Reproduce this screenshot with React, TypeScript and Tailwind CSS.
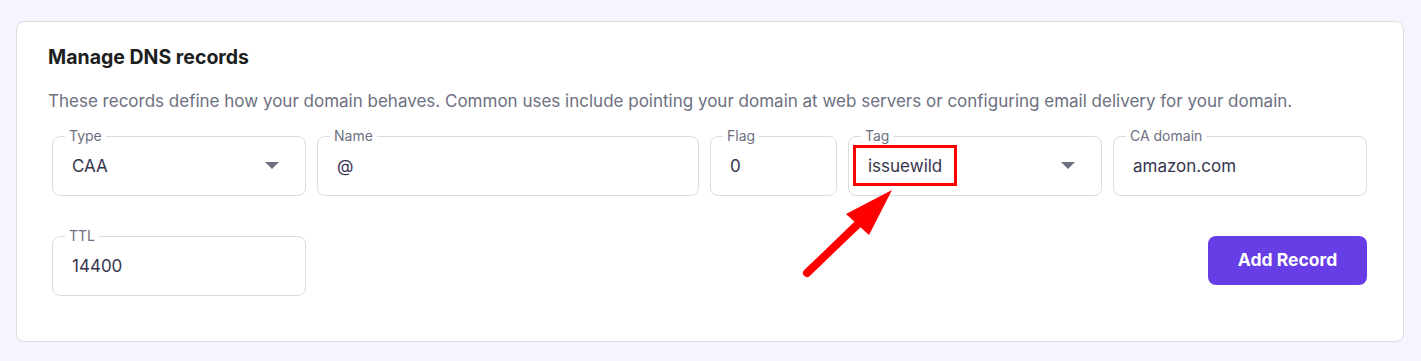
import { ReactNode } from 'react';

function Caret() {
  return (
    <svg width="14" height="8" viewBox="0 0 14 8" className="shrink-0">
      <path d="M0 0 L14 0 L7 7 Z" fill="#6d7081" />
    </svg>
  );
}

function Field({ label, width, value, select }: { label: string; width: string; value: ReactNode; select?: boolean }) {
  return (
    <fieldset className={`${width} h-[68px] shrink-0 rounded-lg border border-[#dadce0] px-3`}>
      <legend className="px-1 text-[14px] leading-4 text-[#6d7081]">{label}</legend>
      <div className="flex items-center justify-between pl-[7px] pr-[14px] pt-[10px]">
        <span className="text-[17px] leading-6 text-[#36344d]">{value}</span>
        {select && <Caret />}
      </div>
    </fieldset>
  );
}

export default function App() {
  return (
    <div className="relative h-[361px] w-full bg-[#f4f5ff] pl-4 pr-[17px] pt-[21px] font-['Inter',sans-serif]">
      <div className="rounded-lg border border-[#dadce0] bg-white pl-[31px] pr-8 pt-[23px] pb-[45px]">
        <h2 className="text-[19.5px] font-bold leading-6 text-[#1d1e20]">Manage DNS records</h2>
        <p className="mt-5 text-[17px] leading-6 text-[#6d7081]">
          These records define how your domain behaves. Common uses include pointing your domain at web servers or configuring email delivery for your domain.
        </p>

        <div className="mt-[15px] px-1">
          {/* Record fields */}
          <div className="flex gap-[11px]">
            <Field label="Type" width="w-[254px]" value="CAA" select />
            <Field label="Name" width="w-[382px]" value="@" />
            <Field label="Flag" width="w-[127px]" value="0" />
            <Field label="Tag" width="w-[254px]" value="issuewild" select />
            <Field label="CA domain" width="w-[254px]" value="amazon.com" />
          </div>

          <div className="mt-8 flex items-start justify-between">
            <Field label="TTL" width="w-[254px]" value="14400" />
            <button className="mt-2 h-[49px] w-[159px] rounded-lg bg-[#673de6] text-[17.5px] font-bold text-white">
              Add Record
            </button>
          </div>
        </div>
      </div>

      {/* annotation */}
      <svg className="pointer-events-none absolute left-0 top-0" width="1421" height="361">
        <rect x="854.5" y="146.5" width="101" height="38" fill="none" stroke="#ff0000" strokeWidth="3" />
        <line x1="807" y1="273" x2="858" y2="224" stroke="#ff0000" strokeWidth="8" strokeLinecap="round" />
        <path d="M892 190 L846 214 L869 235 Z" fill="#ff0000" />
      </svg>
    </div>
  );
}
